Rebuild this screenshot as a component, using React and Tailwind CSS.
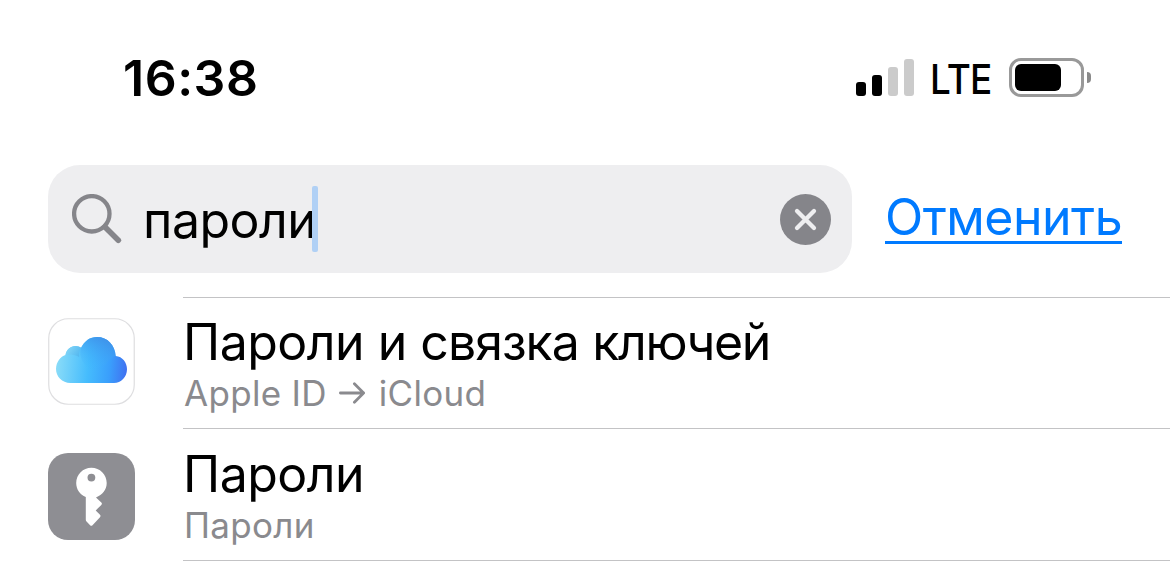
const results = [
  {
    id: 1,
    title: (
      <>
        Пароли и <span className="tracking-[-1px]">связка</span> <span className="tracking-[-1.4px]">ключей</span>
      </>
    ),
    path: ['Apple ID', 'iCloud'],
    Icon: CloudIcon,
    rowClass: 'h-[131px] pt-[14px]',
    iconClass: 'pt-[21px]',
  },
  {
    id: 2,
    title: 'Пароли',
    path: ['Пароли'],
    Icon: KeyIcon,
    rowClass: 'h-[132px] pt-[15px]',
    iconClass: 'pt-[25px]',
  },
]

function CloudIcon() {
  return (
    <svg viewBox="0 0 87 87" className="block size-[87px]">
      <defs>
        <linearGradient id="cloud" x1="8" y1="48" x2="79" y2="54" gradientUnits="userSpaceOnUse">
          <stop offset="0" stopColor="#8adcf8" />
          <stop offset="0.45" stopColor="#45bcfd" />
          <stop offset="0.75" stopColor="#3a9ffc" />
          <stop offset="1" stopColor="#4070f0" />
        </linearGradient>
        <linearGradient id="puff" x1="18" y1="30" x2="34" y2="40" gradientUnits="userSpaceOnUse">
          <stop offset="0" stopColor="#86d8f8" />
          <stop offset="1" stopColor="#48b0ee" />
        </linearGradient>
        <linearGradient id="dome" x1="42" y1="52" x2="56" y2="20" gradientUnits="userSpaceOnUse">
          <stop offset="0" stopColor="#3fb4ff" stopOpacity="0" />
          <stop offset="1" stopColor="#3f93ea" />
        </linearGradient>
      </defs>
      <rect x="0.75" y="0.75" width="85.5" height="85.5" rx="19.5" fill="#fff" stroke="#dedee0" strokeWidth="1.2" />
      <path
        d="M22.500 65C14 65 8 58.500 8 51C8 44 12.500 38.500 17.500 37C18.500 31.500 22.500 28 27.500 28C29.500 28 31.500 28.700 33 29.800C36.500 23 42 19 49 19C59.500 19 67 27 67.700 38C74.500 38.500 79 44.500 79 51.200C79 59 73 65 66 65Z"
        fill="url(#cloud)"
      />
      <path d="M17.500 37C18.500 31.500 22.500 28 27.500 28C29.500 28 31.500 28.700 33 29.800C31.500 33 31 36 31.200 39C27 36.300 22 35.800 17.500 37Z" fill="url(#puff)" />
      <path d="M33 29.800C36.500 23 42 19 49 19C59.500 19 67 27 67.700 38C64 39 60 42 58 46L42 53C36 46 30 40 33 29.800Z" fill="url(#dome)" />
    </svg>
  )
}

function KeyIcon() {
  return (
    <svg viewBox="0 0 87 87" className="block size-[87px]">
      <rect width="87" height="87" rx="20" fill="#8e8e93" />
      <path
        fill="#fff"
        fillRule="evenodd"
        d="M43.400 14.700C51.900 14.700 58.700 21.500 58.700 30C58.700 36.500 54.500 42 48 44.400L53.300 49.600Q54.500 50.800 53.300 52L47.700 57.400L52 61.800Q53 63 52 64.200L44.500 72.200Q43.300 73.400 42.100 72.200L38.300 68.200Q37.800 67.600 37.800 66.800V44C32 41.500 28.200 36.500 28.200 30C28.200 21.500 35 14.700 43.400 14.700ZM43.400 20.700A3.900 3.900 0 1 0 43.400 28.500A3.900 3.900 0 1 0 43.400 20.700Z"
      />
    </svg>
  )
}

const StatusBar = () => {
  return (
    <div className="flex h-[165px] items-start justify-between pt-12 pr-[79px] pl-[123px]">
      <div className="text-[50px] leading-[60px] font-semibold tracking-[0.5px]">16:38</div>
      <div className="flex items-start pt-[10px]">
        <div className="mt-px flex h-[37px] items-end gap-[6px]">
          <div className="h-[14px] w-[10px] rounded-[3px] bg-black" />
          <div className="h-[21px] w-[10px] rounded-[3px] bg-black" />
          <div className="h-[29px] w-[10px] rounded-[3px] bg-[#cbcbcb]" />
          <div className="h-[37px] w-[10px] rounded-[3px] bg-[#cbcbcb]" />
        </div>
        <div className="mt-px ml-[16px] w-[79px] text-[41px] leading-[40px] font-medium tracking-[-0.8px]">
          <div className="w-[88px] origin-left scale-x-[0.9]">LTE</div>
        </div>
        <div className="h-[39px] w-[75px] rounded-[12px] border-[3px] border-[#999] p-[3px]">
          <div className="h-[27px] w-[46px] rounded-[6px] bg-black" />
        </div>
        <div className="mt-[14px] ml-[3px] h-[11px] w-[4px] rounded-r-full bg-[#8a8a8a]" />
      </div>
    </div>
  )
}

const SearchBar = () => {
  return (
    <div className="flex h-[132px] items-start pl-12">
      <div className="flex h-[107.5px] w-[804px] items-start rounded-[32px] bg-[#eeeef0] pr-[21px] pl-6">
        <svg viewBox="0 0 50 50" className="mt-[29px] size-[50px]" fill="none" stroke="#85858a">
          <circle cx="19.800" cy="19.800" r="17.700" strokeWidth="4.300" />
          <path d="M33 33L46.300 46.300" strokeWidth="5.600" strokeLinecap="round" />
        </svg>
        <div className="mt-[25px] ml-[21px] w-[169px] text-[50px] leading-[60px] tracking-[-0.5px] whitespace-nowrap">пароли</div>
        <div className="mt-[21px] h-[66px] w-[6px] rounded-[2px] bg-[#b0d0f5]" />
        <button className="mt-[29px] ml-auto">
          <svg viewBox="0 0 51 51" className="block size-[51px]">
            <circle cx="25.500" cy="25.500" r="25.500" fill="#85858a" />
            <path d="M17 17L34 34M34 17L17 34" stroke="#eeeef0" strokeWidth="4.300" strokeLinecap="round" />
          </svg>
        </button>
      </div>
      <button className="mt-[22px] ml-[33px] h-[57px] w-[237px] border-b-[3px] border-[#007aff] text-left text-[50px] leading-[60px] tracking-[-0.5px] whitespace-nowrap text-[#007aff]">
        Отменить
      </button>
    </div>
  )
}

const ResultRow = ({ title, path, Icon, rowClass, iconClass }) => {
  return (
    <div className="flex pl-12">
      <div className={`h-0 w-[135px] ${iconClass}`}>
        <Icon />
      </div>
      <div className={`flex-1 border-t border-[#c3c3c5] ${rowClass}`}>
        <div className="text-[50px] leading-[60px] tracking-[-0.5px] whitespace-nowrap">{title}</div>
        <div className="flex items-center pl-px text-[35px] leading-[42px] tracking-[0.3px] whitespace-nowrap text-[#8a8a8e]">
          {path.map((part, i) => (
            <span key={part} className="flex items-center">
              {i > 0 && (
                <svg viewBox="0 0 26 22" className="mr-[14px] ml-[12px] h-[22px] w-[26px]" fill="none" stroke="currentColor" strokeWidth="2.800" strokeLinecap="round" strokeLinejoin="round">
                  <path d="M1.400 11H24.600M15.400 1.800L24.600 11L15.400 20.200" />
                </svg>
              )}
              {part}
            </span>
          ))}
        </div>
      </div>
    </div>
  )
}

const App = () => {
  return (
    <div className="h-[574px] w-[1170px] overflow-hidden bg-white font-['Inter',sans-serif] text-black">
      <StatusBar />
      <SearchBar />
      {results.map((item) => (
        <ResultRow key={item.id} {...item} />
      ))}
      <div className="ml-[183px] border-t border-[#c3c3c5]" />
    </div>
  )
}

export default App
